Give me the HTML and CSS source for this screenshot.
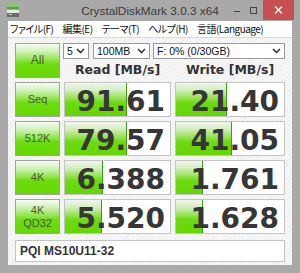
FILE: index.html
```html
<!DOCTYPE html>
<html>
<head>
<meta charset="utf-8">
<link rel="stylesheet" href="styles.css">
</head>
<body>
<div class="window">
  <div class="titlebar">
    <svg class="app-icon" width="12" height="14" viewBox="0 0 12 14">
      <rect x="0" y="0" width="12" height="2" fill="#6fd94a"/>
      <rect x="0" y="3" width="12" height="2" fill="#3fae2a"/>
      <rect x="0" y="6" width="12" height="3" fill="#e6e6e6"/>
      <rect x="0" y="9" width="12" height="4" fill="#6a6a6a"/>
      <rect x="2" y="10" width="3" height="1" fill="#d0d0d0"/>
    </svg>
    <div class="title">CrystalDiskMark 3.0.3 x64</div>
    <div class="caption">
      <div class="cap-btn"><svg width="9" height="9" viewBox="0 0 9 9"><rect x="1" y="5" width="6" height="1" fill="#444"/></svg></div>
      <div class="cap-btn"><svg width="9" height="9" viewBox="0 0 9 9"><rect x="1.5" y="1.5" width="6" height="6" fill="none" stroke="#444" stroke-width="1"/></svg></div>
      <div class="cap-close"><svg width="9" height="8" viewBox="0 0 9 8"><path d="M1 0.5 L8 7.5 M8 0.5 L1 7.5" stroke="#fff" stroke-width="1.4"/></svg></div>
    </div>
  </div>
  <div class="frame">
    <div class="menubar">
      <span class="mi">ファイル(F)</span>
      <span class="mi">編集(E)</span>
      <span class="mi">テーマ(T)</span>
      <span class="mi">ヘルプ(H)</span>
      <span class="mi">言語(Language)</span>
    </div>
    <div class="client">
      <div class="grid">
        <div class="label all">All</div>
        <div class="selects">
          <div class="sel s1"><span>5</span><svg class="chev" width="9" height="6" viewBox="0 0 9 6"><path d="M1 1 L4.5 4.5 L8 1" fill="none" stroke="#222" stroke-width="1.4"/></svg></div>
          <div class="sel s2"><span>100MB</span><svg class="chev" width="9" height="6" viewBox="0 0 9 6"><path d="M1 1 L4.5 4.5 L8 1" fill="none" stroke="#222" stroke-width="1.4"/></svg></div>
          <div class="sel s3"><span>F: 0% (0/30GB)</span><svg class="chev" width="9" height="6" viewBox="0 0 9 6"><path d="M1 1 L4.5 4.5 L8 1" fill="none" stroke="#222" stroke-width="1.4"/></svg></div>
        </div>
        <div class="head">Read [MB/s]</div>
        <div class="head">Write [MB/s]</div>

        <div class="label">Seq</div>
        <div class="cell"><div class="bar" style="width:62px"></div><span class="val">91.61</span></div>
        <div class="cell"><div class="bar" style="width:51px"></div><span class="val">21.40</span></div>

        <div class="label">512K</div>
        <div class="cell"><div class="bar" style="width:62px"></div><span class="val">79.57</span></div>
        <div class="cell"><div class="bar" style="width:56px"></div><span class="val">41.05</span></div>

        <div class="label">4K</div>
        <div class="cell"><div class="bar" style="width:38px"></div><span class="val">6.388</span></div>
        <div class="cell"><div class="bar" style="width:27px"></div><span class="val">1.761</span></div>

        <div class="label two">4K<br>QD32</div>
        <div class="cell"><div class="bar" style="width:37px"></div><span class="val">5.520</span></div>
        <div class="cell"><div class="bar" style="width:27px"></div><span class="val">1.628</span></div>
      </div>
      <div class="name">PQI MS10U11-32</div>
    </div>
  </div>
</div>
</body>
</html>
```

FILE: styles.css
```css
html, body {
  margin: 0;
  padding: 0;
}
body {
  width: 300px;
  height: 273px;
  overflow: hidden;
  background: #a8a8a8;
}
.window {
  width: 300px;
  height: 273px;
  box-sizing: border-box;
  background: #a9a9a9;
  display: flex;
  flex-direction: column;
}
.titlebar {
  height: 21px;
  flex-shrink: 0;
  display: flex;
  align-items: center;
  position: relative;
}
.app-icon {
  margin-left: 7px;
  margin-top: 1px;
}
.title {
  position: absolute;
  left: 0;
  right: 0;
  top: 4px;
  text-align: center;
  font-family: "Liberation Sans", sans-serif;
  font-size: 11.8px;
  color: #3a3a3a;
}
.caption {
  position: absolute;
  right: 6px;
  top: 0;
  display: flex;
  align-items: flex-start;
}
.cap-btn {
  width: 16px;
  height: 16px;
  display: flex;
  align-items: center;
  justify-content: center;
  margin-top: 2px;
}
.cap-close {
  width: 31px;
  height: 20px;
  background: #c75050;
  display: flex;
  align-items: center;
  justify-content: center;
  margin-left: 2px;
}
.frame {
  flex: 1;
  padding: 0 8px 8px 8px;
  display: flex;
  flex-direction: column;
}
.menubar {
  height: 16px;
  flex-shrink: 0;
  background: #ffffff;
  border-bottom: 1px solid #dadada;
  display: flex;
  align-items: center;
  font-family: "Noto Sans CJK JP", sans-serif;
  font-feature-settings: "palt";
  font-size: 10px;
  letter-spacing: -0.5px;
  color: #111;
  padding-left: 2px;
  overflow: hidden;
  white-space: nowrap;
}
.mi {
  flex-shrink: 0;
  white-space: nowrap;
  margin-right: 9px;
  line-height: 16px;
}
.client {
  flex: 1;
  background: repeating-linear-gradient(135deg, #f7f7f7 0 2px, #eeeeee 2px 3px);
  padding: 5px 7px 3px 7px;
  display: flex;
  flex-direction: column;
}
.grid {
  display: grid;
  grid-template-columns: 45px 107px 110px;
  grid-template-rows: 15px 16px 35px 35px 35px 35px;
  column-gap: 4px;
  row-gap: 4px;
}
.label {
  box-sizing: border-box;
  border: 1px solid #a2a2a2;
  background: linear-gradient(to bottom, #f6fcf2 0%, #d6f3c2 20%, #9ae65a 45%, #6cdc10 60%, #66d800 100%);
  display: flex;
  align-items: center;
  justify-content: center;
  text-align: center;
  font-family: "Liberation Sans", sans-serif;
  font-size: 11px;
  line-height: 13px;
  color: #3f5e28;
}
.label.all {
  grid-row: 1 / 3;
  font-size: 12px;
}
.selects {
  grid-column: 2 / 4;
  display: flex;
  margin-left: -1px;
}
.sel {
  box-sizing: border-box;
  height: 16px;
  background: #fff;
  border: 1px solid #9a9a9a;
  display: flex;
  align-items: center;
  justify-content: space-between;
  padding: 0 3px 0 3px;
  font-family: "Liberation Sans", sans-serif;
  font-size: 10.5px;
  color: #111;
}
.s1 { width: 26px; }
.s2 { width: 57px; margin-left: 4px; }
.s3 { flex: 1; margin-left: 3px; }
.head {
  text-align: center;
  font-family: "DejaVu Sans", sans-serif;
  font-weight: bold;
  font-size: 12.5px;
  line-height: 16px;
  color: #333;
}
.cell {
  box-sizing: border-box;
  border: 1px solid #c4c4c4;
  background: #fff;
  position: relative;
  display: flex;
  align-items: center;
  justify-content: flex-end;
  overflow: hidden;
}
.bar {
  position: absolute;
  left: 0;
  top: 0;
  bottom: 0;
  box-sizing: border-box;
  border-right: 1px solid #3f9a1a;
  background: linear-gradient(to bottom, #f2f6ee 0%, #d2eebe 22%, #98e256 45%, #6cda12 60%, #66d600 100%);
}
.val {
  position: relative;
  font-family: "DejaVu Sans", sans-serif;
  font-weight: bold;
  font-size: 28px;
  color: #363636;
  padding-right: 5px;
  padding-top: 4px;
  line-height: 30px;
}
.name {
  margin-top: 6px;
  height: 22px;
  box-sizing: border-box;
  background: #fff;
  border: 1px solid #c4c4c4;
  display: flex;
  align-items: center;
  padding-left: 4px;
  font-family: "Liberation Sans", sans-serif;
  font-weight: bold;
  font-size: 12px;
  color: #333;
}
```
